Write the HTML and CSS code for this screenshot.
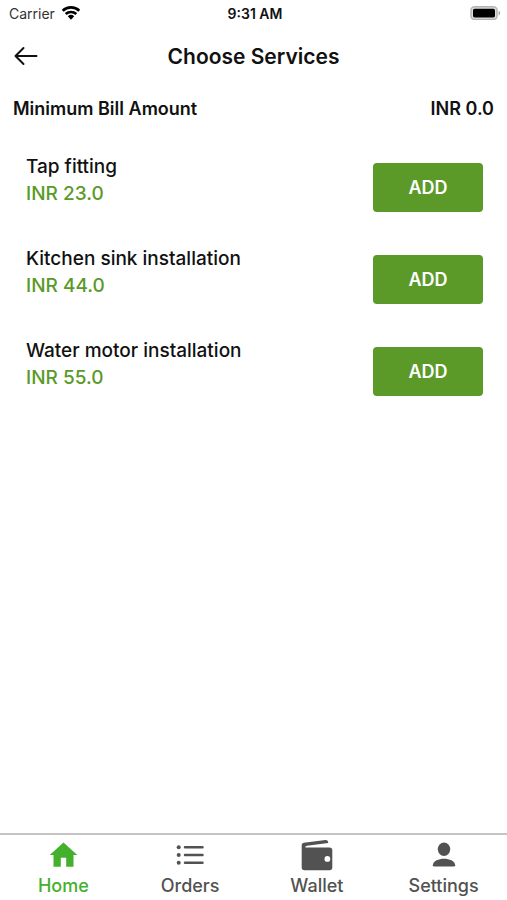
FILE: index.html
```html
<!DOCTYPE html>
<html lang="en">
<head>
<meta charset="utf-8">
<meta name="viewport" content="width=device-width, initial-scale=1">
<title>Choose Services</title>
<link rel="stylesheet" href="styles.css">
</head>
<body>
<div class="status">
  <div class="carrier"><span>Carrier</span>
    <svg width="20" height="16" viewBox="0 0 20 16" aria-hidden="true"><g fill="none" stroke="#000" stroke-width="2.7"><path d="M1.7 5.8a12 12 0 0 1 16.6 0"/><path d="M4.7 9.1a7.7 7.7 0 0 1 10.6 0"/></g><path d="M6.8 11.3a4.7 4.7 0 0 1 6.4 0L10 14.8z"/></svg>
  </div>
  <span class="time">9:31 AM</span>
  <svg class="battery" width="31" height="14" viewBox="0 0 31 14" aria-hidden="true"><rect x="1" y="0.8" width="26" height="12.6" rx="3.5" fill="#ddd" stroke="#b4b4b4" stroke-width="1.5"/><rect x="3" y="2.8" width="22" height="8.6" rx="1.6"/><path d="M28.6 4.8c2.2.8 2.2 3.8 0 4.6z" fill="#aaa"/></svg>
</div>
<header class="header">
  <button class="back" type="button" aria-label="Back"><svg width="24" height="20" viewBox="0 0 24 20" fill="none" stroke="#111" stroke-width="2" stroke-linecap="round" stroke-linejoin="round" aria-hidden="true"><path d="M9.5 2 1.5 10l8 8M1.5 10h21"/></svg></button>
  <h1>Choose Services</h1>
</header>
<main>
  <div class="bill"><span>Minimum Bill Amount</span><span>INR 0.0</span></div>
  <ul class="services">
    <li><div class="info"><h2>Tap fitting</h2><p>INR 23.0</p></div><button class="add" type="button" aria-label="ADD Tap fitting">ADD</button></li>
    <li><div class="info"><h2>Kitchen sink installation</h2><p>INR 44.0</p></div><button class="add" type="button" aria-label="ADD Kitchen sink installation">ADD</button></li>
    <li><div class="info"><h2>Water motor installation</h2><p>INR 55.0</p></div><button class="add" type="button" aria-label="ADD Water motor installation">ADD</button></li>
  </ul>
</main>
<nav class="tabs">
  <a class="active" href="#home"><svg width="32" height="32" viewBox="0 0 32 32" aria-hidden="true"><path d="M16.5 2.5 30.3 15h-3.8v11.8h-7.3v-9h-5.4v9H6.5V15H2.7z"/></svg>Home</a>
  <a href="#orders"><svg width="32" height="32" viewBox="0 0 32 32" aria-hidden="true"><circle cx="4.7" cy="7.3" r="2"/><circle cx="4.7" cy="15" r="2"/><circle cx="4.7" cy="22.7" r="2"/><path d="M11 7.3H28.5M11 15H28.5M11 22.7H28.5" stroke="currentColor" stroke-width="2.5" stroke-linecap="round"/></svg>Orders</a>
  <a href="#wallet"><svg width="32" height="32" viewBox="0 0 32 32" aria-hidden="true"><path fill-rule="evenodd" d="M.7 5Q.7 3.2 2.8 2.8L24.5-.1Q27.2-.2 27.2 3L6 5.7Q3.6 6.2 4.4 7.5H28.5Q31.3 7.5 31.3 10V27.5Q31.3 30.3 28.5 30.3H3.5Q.7 30.3.7 27.5zM26.4 16a2.9 2.9 0 1 0 0 5.8 2.9 2.9 0 0 0 0-5.8z"/></svg>Wallet</a>
  <a href="#settings"><svg width="32" height="32" viewBox="0 0 32 32" aria-hidden="true"><ellipse cx="16" cy="9.2" rx="6.2" ry="6.7"/><path d="M4.8 25.2C5.5 16.7 26.5 16.7 27.2 25.2Q27.2 26.5 25.8 26.5H6.2Q4.8 26.5 4.8 25.2z"/></svg>Settings</a>
</nav>
</body>
</html>
```
FILE: styles.css
```css
* { box-sizing: border-box; }
body {
  margin: 0;
  min-height: 100vh;
  display: flex;
  flex-direction: column;
  background: #fff;
  color: #111;
  font-family: Inter, "Liberation Sans", sans-serif;
}
h1, h2, p, ul { margin: 0; padding: 0; font-weight: 500; }
button { font-family: inherit; border: 0; cursor: pointer; }
.status {
  display: grid;
  grid-template-columns: 1fr auto 1fr;
  align-items: center;
  height: 28px;
  padding: 0 6px 2px 9px;
  font-size: 14px;
}
.carrier { display: flex; align-items: center; gap: 6px; color: #333; }
.time { font-weight: 600; }
.battery { justify-self: end; }
.header {
  display: grid;
  grid-template-columns: 24px 1fr 24px;
  align-items: center;
  height: 56px;
  padding: 0 14px;
}
.back { display: flex; padding: 0; background: none; }
.header h1 { text-align: center; font-size: 21px; font-weight: 600; }
main { flex: 1; }
.bill {
  display: flex;
  justify-content: space-between;
  padding: 13px 13px 11px;
  font-size: 18px;
  line-height: 24px;
  font-weight: 600;
}
.services { list-style: none; padding: 9px 24px 0 26px; }
.services li {
  display: flex;
  justify-content: space-between;
  align-items: flex-start;
  min-height: 92px;
  padding-top: 12px;
}
.info { font-size: 19px; line-height: 27px; }
.info h2 { font-size: 19px; font-weight: 500; }
.info p { color: #5a9a28; }
.add {
  width: 110px;
  height: 49px;
  margin-top: 10px;
  padding: 0;
  border-radius: 4px;
  background: #5b9a28;
  color: #fff;
  font-size: 18px;
  font-weight: 600;
}
.tabs {
  display: grid;
  grid-template-columns: repeat(4, 1fr);
  border-top: 2px solid #c4c4c4;
  padding: 5px 0 1px;
}
.tabs a {
  display: flex;
  flex-direction: column;
  align-items: center;
  gap: 1px;
  color: #525252;
  font-size: 18px;
  line-height: 26px;
  font-weight: 500;
  text-decoration: none;
}
.tabs svg { fill: currentColor; overflow: visible; }
.tabs .active { color: #45b02c; }
```
